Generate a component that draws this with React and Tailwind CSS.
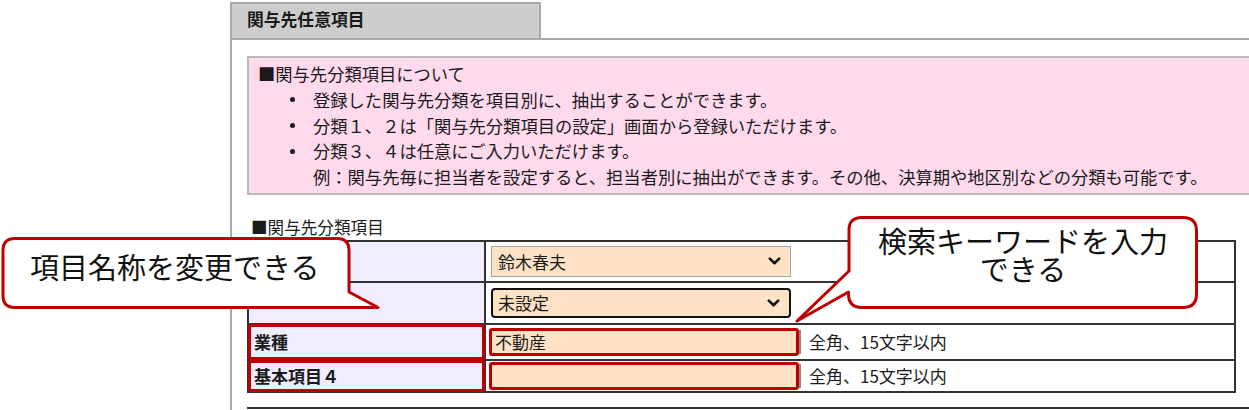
import React from "react";

function Chevron() {
  return (
    <svg width="13" height="8" viewBox="0 0 13 8">
      <path d="M1.8 1.6 L6.5 6.2 L11.2 1.6" fill="none" stroke="#111" strokeWidth="2.6" strokeLinecap="round" strokeLinejoin="round" />
    </svg>
  );
}

function RedFrame() {
  return <div className="absolute -inset-[1px] border-[3px] border-[#c00000] rounded-[3px] pointer-events-none" />;
}

function Bullet({ children }) {
  return (
    <div className="flex items-center ml-[32px]">
      <span className="w-[23px] flex items-center">
        <span className="block w-[5px] h-[5px] rounded-full bg-[#1a1a1a]" />
      </span>
      <span>{children}</span>
    </div>
  );
}

function TextRow({ label, value, last }) {
  return (
    <div className={`flex ${last ? "h-[30px]" : "h-[36px] border-b-2 border-[#333]"}`}>
      <div className="relative w-[237px] bg-[#f1ecff] border-r-2 border-[#333] flex items-center pl-[5px] text-[17px] font-bold">
        {label}
        <RedFrame />
      </div>
      <div className="flex items-center pl-[3px]">
        <div className="flex items-center">
          <div className="w-[310px] h-[28px] bg-[#fde2c6] border-[3px] border-[#c00000] rounded-[3px] flex items-center pl-[3px] text-[17px] leading-none">
            {value}
          </div>
          <div className="w-[2px] h-[24px] bg-[#8a8a8a]" />
        </div>
        <span className="ml-[8px] text-[17px]">全角、15文字以内</span>
      </div>
    </div>
  );
}

export default function App() {
  return (
    <div className="relative w-[1249px] h-[410px] overflow-hidden bg-white text-[#1a1a1a] font-['Noto_Sans_CJK_JP','Noto_Sans',sans-serif]">
      <div className="ml-[230px] pt-[2px]">
        <div className="w-[311px] h-[36px] bg-[#cdcdcd] border-2 border-b-0 border-[#a9a9a9] pl-[15px] pb-[3px] flex items-center text-[16.8px] font-bold">
          関与先任意項目
        </div>
        <div className="border-l-2 border-t-2 border-[#a9a9a9] pl-[15px] pt-[16px] h-[400px]">
          <div className="w-[1010px] bg-[#ffd9ec] border-2 border-[#b8b8b8] pl-[9px] pt-[3px] pb-[3px] text-[17.3px] leading-[25.8px]">
            <div>■関与先分類項目について</div>
            <Bullet>登録した関与先分類を項目別に、抽出することができます。</Bullet>
            <Bullet>分類１、２は「関与先分類項目の設定」画面から登録いただけます。</Bullet>
            <Bullet>分類３、４は任意にご入力いただけます。</Bullet>
            <div className="ml-[55px]">
              例：関与先毎に担当者を設定すると、担当者別に抽出ができます。その他、決算期や地区別などの分類も可能です。
            </div>
          </div>

          <div className="mt-[22px] h-[20px] leading-[20px] pl-[4px] text-[16.6px]">■関与先分類項目</div>

          <div className="mt-[3px] w-[989px] border-2 border-[#333]">
            <div className="flex h-[41px] border-b-2 border-[#333]">
              <div className="w-[237px] bg-[#f1ecff] border-r-2 border-[#333] flex items-center pl-[5px] text-[17px] font-bold">担当者</div>
              <div className="flex items-center pl-[5px]">
                <div className="w-[300px] h-[31px] bg-[#fde2c6] border border-[#a5a5a5] flex items-center justify-between pl-[6px] pr-[9px] text-[17px]">
                  <span>鈴木春夫</span>
                  <Chevron />
                </div>
              </div>
            </div>
            <div className="flex h-[42px] border-b-2 border-[#333]">
              <div className="w-[237px] bg-[#f1ecff] border-r-2 border-[#333] flex items-center pl-[5px] pb-[9px] text-[17px] font-bold">決算期</div>
              <div className="flex items-center pl-[5px]">
                <div className="w-[300px] h-[30px] bg-[#fde2c6] border-2 border-[#111] rounded-[4px] flex items-center justify-between pl-[5px] pr-[9px] text-[17px]">
                  <span>未設定</span>
                  <Chevron />
                </div>
              </div>
            </div>
            <TextRow label="業種" value="不動産" />
            <TextRow label="基本項目４" value="" last />
          </div>

          <div className="mt-[14px] border-t-2 border-[#333] w-[1010px]" />
        </div>
      </div>

      <svg className="absolute left-0 top-0 pointer-events-none" width="1249" height="410" viewBox="0 0 1249 410">
        <path
          d="M15 238.5 H337 Q349 238.5 349 250.5 V292 L378 307.5 H15 Q3 307.5 3 295.5 V250.5 Q3 238.5 15 238.5 Z"
          fill="#fff"
          stroke="#c00000"
          strokeWidth="3"
          strokeLinejoin="round"
        />
        <path
          d="M862 217.5 H1183 Q1196.5 217.5 1196.5 231 V294 Q1196.5 307.5 1183 307.5 H862 Q848.5 307.5 848.5 294 V292 L797 321 L849 271 V231 Q848.5 217.5 862 217.5 Z"
          fill="#fff"
          stroke="#c00000"
          strokeWidth="3"
          strokeLinejoin="round"
        />
      </svg>

      <div className="absolute left-[30px] top-[248px] text-[29px] leading-[36px] text-[#111] whitespace-nowrap">
        項目名称を変更できる
      </div>
      <div className="absolute left-[850px] top-[226px] w-[346px] text-center text-[29px] leading-[28px] text-[#111] whitespace-nowrap">
        <div>検索キーワードを入力</div>
        <div>できる</div>
      </div>
    </div>
  );
}
